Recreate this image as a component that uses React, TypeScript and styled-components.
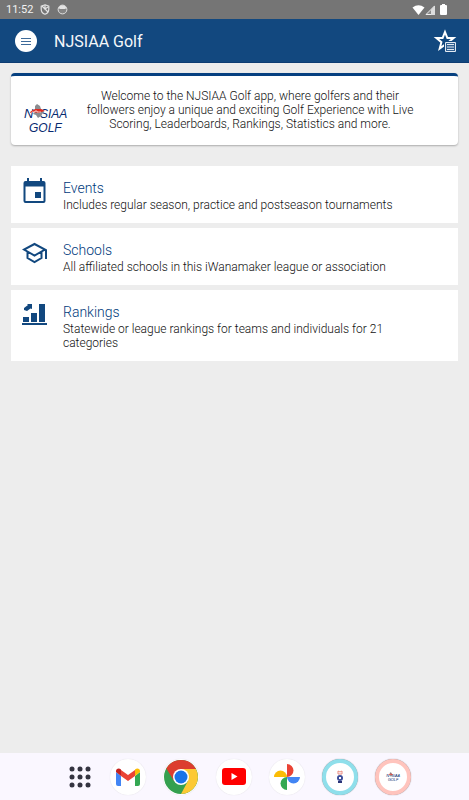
import React from "react";
import styled, { createGlobalStyle } from "styled-components";

const GlobalStyle = createGlobalStyle`
  *, *::before, *::after { box-sizing: border-box; }
  html, body { margin: 0; background: #ededed; }
  body { font-family: Roboto, "Liberation Sans", sans-serif; color: #111; }
`;

const Screen = styled.div`
  min-height: 100vh;
  display: flex;
  flex-direction: column;
  background: #ededed;
`;

const StatusBar = styled.div`
  height: 19px;
  padding: 0 20px 0 6px;
  display: flex;
  align-items: center;
  justify-content: space-between;
  background: #757575;
  color: #f2f2f2;
  font-size: 11px;
  line-height: 19px;
`;

const StatusGroup = styled.div<{ $gap: number }>`
  display: flex;
  align-items: center;
  gap: ${(p) => p.$gap}px;
  svg { display: block; }
`;

const AppBar = styled.header`
  height: 44px;
  padding: 0 12px 0 15px;
  display: flex;
  align-items: center;
  background: #12487f;
  border-bottom: 1px solid #0d3c72;
`;

const MenuButton = styled.button`
  width: 22px;
  height: 22px;
  padding: 0;
  border: 0;
  border-radius: 50%;
  background: #fff;
  display: grid;
  place-items: center;
`;

const Title = styled.h1`
  flex: 1;
  margin: 2px 0 0 17px;
  color: #f4f7fa;
  font-size: 16px;
  font-weight: 400;
  line-height: 20px;
`;

const IconButton = styled.button`
  padding: 0;
  border: 0;
  background: none;
  svg { display: block; }
`;

const Content = styled.main`
  flex: 1;
  padding: 10px 11px;
`;

const Welcome = styled.section`
  min-height: 72px;
  padding: 0 39px 2px 12px;
  display: flex;
  align-items: center;
  gap: 14px;
  background: #fff;
  border-top: 3px solid #064080;
  border-radius: 4px;
  box-shadow: 0 1px 2px rgba(0, 0, 0, 0.28);
`;

const LogoSlot = styled.div`
  flex: none;
  padding-top: 18px;
`;

const WelcomeText = styled.p`
  flex: 1;
  margin: 0;
  text-align: center;
  font-size: 12px;
  font-weight: 300;
  line-height: 14px;
`;

const List = styled.nav`
  margin-top: 21px;
  display: grid;
  gap: 5px;
`;

const Row = styled.a`
  padding: 11px 60px 11px 11px;
  display: flex;
  gap: 16px;
  background: #fff;
  color: inherit;
  text-decoration: none;
  svg { flex: none; display: block; }
`;

const RowTitle = styled.h2`
  margin: 1px 0 0;
  color: #003a7c;
  font-size: 14px;
  font-weight: 300;
  line-height: 20px;
`;

const RowText = styled.p`
  margin: 0;
  font-size: 12px;
  font-weight: 300;
  line-height: 14px;
`;

const Dock = styled.footer`
  height: 47px;
  padding-left: 8px;
  display: flex;
  align-items: center;
  justify-content: center;
  gap: 17px;
  background: #faf7ff;
`;

const DockButton = styled.button<{ $ring?: string }>`
  width: 36px;
  height: 36px;
  padding: 0;
  border: ${(p) => (p.$ring ? `4px solid ${p.$ring}` : "0")};
  border-radius: 50%;
  background: #fff;
  box-shadow: 0 0 1px rgba(0, 0, 0, ${(p) => (p.$ring ? 0.5 : 0.15)});
  display: grid;
  place-items: center;
  svg { display: block; }
`;

const AppsButton = styled(DockButton)`
  width: 26px;
  background: none;
  box-shadow: none;
`;

const LogoSvg = styled.svg`
  display: block;
  overflow: visible;
`;

function LeagueLogo({ width }: { width: number }) {
  return (
    <LogoSvg width={width} height={Math.round(width * 0.68)} viewBox="0 0 44 30" role="img" aria-label="NJSIAA Golf">
      <g fontFamily="Liberation Sans, sans-serif" fontStyle="italic" fill="#062a70">
        <text x="1" y="14" fontSize="13">N</text>
        <text x="17" y="14" fontSize="12">SIAA</text>
        <text x="6" y="28" fontSize="12">GOLF</text>
      </g>
      <path d="M12 2l2-2 3 2 1 3 3 2-3 5-3 2-2-3-3-1 2-3z" fill="#8b8c90" />
      <path d="M7 8l5-3h6l4 2-4 1-2 1-7-1-2 1z" fill="#e02a20" />
      <path d="M9 8h3v-1h2v1h4" fill="none" stroke="#fff" strokeWidth="0.7" />
    </LogoSvg>
  );
}

function CalendarIcon() {
  return (
    <svg width="25" height="28" viewBox="0 0 25 28" aria-hidden="true">
      <path d="M5 1h2v3h11V1h2v3h1.500a2 2 0 0 1 2 2v18a2 2 0 0 1-2 2h-18a2 2 0 0 1-2-2V6a2 2 0 0 1 2-2H5zM3.500 9.500V24h18V9.500z" fill="#12487f" fillRule="evenodd" />
      <path d="M13 15h6v6h-6z" fill="#12487f" />
    </svg>
  );
}

function SchoolIcon() {
  return (
    <svg width="25" height="28" viewBox="0 0 25 28" aria-hidden="true">
      <path d="M12.500 5L2 10.500l10.500 6L23 10.500zM5.500 13v6l7 4 7-4v-6M24 10.500V20" fill="none" stroke="#12487f" strokeWidth="2" />
    </svg>
  );
}

function RankingIcon() {
  return (
    <svg width="25" height="28" viewBox="0 0 25 28" aria-hidden="true">
      <path d="M0 22h25v2H0zM1 16h6v5H1zM9 12h6v9H9zM17 3h6v18h-6zM5 3h5v5L8.500 7.500 5 10 2 9V7l4-3z" fill="#12487f" />
    </svg>
  );
}

const links = [
  { title: "Events", text: "Includes regular season, practice and postseason tournaments", icon: <CalendarIcon /> },
  { title: "Schools", text: "All affiliated schools in this iWanamaker league or association", icon: <SchoolIcon /> },
  { title: "Rankings", text: "Statewide or league rankings for teams and individuals for 21 categories", icon: <RankingIcon /> },
];

function ShieldIcon() {
  return (
    <svg width="10" height="11" viewBox="0 0 10 11" aria-hidden="true">
      <path d="M5 .8l3.800 1.400v3C8.800 7.500 7 9.500 5 10.300 3 9.500 1.200 7.500 1.200 5.200v-3z" fill="none" stroke="#e4e4e4" strokeWidth="1.200" />
      <path d="M2 2l6 6M5 1v4l3-2" fill="none" stroke="#e4e4e4" strokeWidth="1.200" />
    </svg>
  );
}

function FaceIcon() {
  return (
    <svg width="11" height="11" viewBox="0 0 11 11" aria-hidden="true">
      <circle cx="5.500" cy="5.500" r="4.400" fill="#858585" stroke="#e0e0e0" />
      <path d="M1.500 4a4.300 4.300 0 0 1 8 0L8 5H3z" fill="#e4e4e4" />
    </svg>
  );
}

export default function App() {
  return (
    <Screen>
      <GlobalStyle />
      <StatusBar>
        <StatusGroup $gap={7}>
          <span>11:52</span>
          <ShieldIcon />
          <FaceIcon />
        </StatusGroup>
        <StatusGroup $gap={0} aria-label="Wi-Fi, signal and battery">
          <svg width="37" height="12" viewBox="0 0 37 12" aria-hidden="true">
            <path d="M.5 3.500Q6.500-1 12.500 3.500L6.500 11z" fill="#fff" />
            <path d="M14 10.500L22.500 2v8.500z" fill="#8a8a8a" stroke="#eee" />
            <path d="M19 5.500L23 1.500V11h-4z" fill="#ddd" />
            <path d="M30 0h3v1h1a1 1 0 0 1 1 1v8a1 1 0 0 1-1 1h-5a1 1 0 0 1-1-1V2a1 1 0 0 1 1-1h1z" fill="#fff" />
          </svg>
        </StatusGroup>
      </StatusBar>
      <AppBar>
        <MenuButton aria-label="Menu">
          <svg width="10" height="8" viewBox="0 0 10 8" aria-hidden="true">
            <path d="M0 1.500h10M0 4.500h10M0 7.500h10" stroke="#3d6a99" />
          </svg>
        </MenuButton>
        <Title>NJSIAA Golf</Title>
        <IconButton aria-label="Favorites">
          <svg width="24" height="24" viewBox="0 0 24 24" aria-hidden="true">
            <path d="M12 3l2.400 6h6.200l-5 4.200 1.700 6.300-5.300-3.700-5.300 3.700 1.700-6.300-5-4.200h6.200z" fill="none" stroke="#fff" strokeWidth="2" />
            <path d="M11 12h12v11H11z" fill="#12487f" />
            <path d="M12.500 13.500h10v9h-10z" fill="#315f90" stroke="#e3eaf2" />
            <path d="M14 15.500h7M14 18h7M14 20.500h7" stroke="#e3eaf2" />
          </svg>
        </IconButton>
      </AppBar>
      <Content>
        <Welcome>
          <LogoSlot>
            <LeagueLogo width={44} />
          </LogoSlot>
          <WelcomeText>
            Welcome to the NJSIAA Golf app, where golfers and their followers enjoy a unique and exciting Golf
            Experience with Live Scoring, Leaderboards, Rankings, Statistics and more.
          </WelcomeText>
        </Welcome>
        <List aria-label="Main">
          {links.map((item) => (
            <Row href="#" key={item.title}>
              {item.icon}
              <div>
                <RowTitle>{item.title}</RowTitle>
                <RowText>{item.text}</RowText>
              </div>
            </Row>
          ))}
        </List>
      </Content>
      <Dock>
        <AppsButton aria-label="All apps">
          <svg width="22" height="22" viewBox="0 0 22 22" fill="#343440" aria-hidden="true">
            {[3, 11, 19].map((y) => [3, 11, 19].map((x) => <circle key={`${x}-${y}`} cx={x} cy={y} r="2.500" />))}
          </svg>
        </AppsButton>
        <DockButton aria-label="Gmail">
          <svg width="24" height="18" viewBox="0 0 24 18" aria-hidden="true">
            <path d="M0 4l5 4v10H2a2 2 0 0 1-2-2z" fill="#4285f4" />
            <path d="M24 4l-5 4v10h3a2 2 0 0 0 2-2z" fill="#34a853" />
            <path d="M5 2l7 5 7-5v6l-7 5-7-5z" fill="#ea4335" />
            <path d="M0 3C0 .5 3-.5 5 1.500V8L0 4z" fill="#c5221f" />
            <path d="M24 3c0-2.500-3-3.500-5-1.500V8l5-4z" fill="#fbbc04" />
          </svg>
        </DockButton>
        <DockButton aria-label="Chrome">
          <svg width="34" height="34" viewBox="0 0 34 34" aria-hidden="true">
            <circle cx="17" cy="17" r="17" fill="#34a04f" />
            <path d="M17 9h14.900A17 17 0 0 1 17 34l6.900-13z" fill="#fcc934" />
            <path d="M17 9h15A17 17 0 0 0 2.300 8.500L10 21z" fill="#dc3d2e" />
            <circle cx="17" cy="17" r="8" fill="#fff" />
            <circle cx="17" cy="17" r="6.500" fill="#1a73e8" />
          </svg>
        </DockButton>
        <DockButton aria-label="YouTube">
          <svg width="24" height="17" viewBox="0 0 24 17" aria-hidden="true">
            <rect width="24" height="17" rx="3" fill="#f00" />
            <path d="M9.500 5l6 3.500-6 3.500z" fill="#fff" />
          </svg>
        </DockButton>
        <DockButton aria-label="Photos">
          <svg width="26" height="26" viewBox="0 0 26 26" aria-hidden="true">
            <path d="M13 0a6.500 6.500 0 0 1 0 13z" fill="#ea4335" />
            <path d="M26 13a6.500 6.500 0 0 1-13 0z" fill="#4285f4" />
            <path d="M13 26a6.500 6.500 0 0 1 0-13z" fill="#34a853" />
            <path d="M0 13a6.500 6.500 0 0 1 13 0z" fill="#fbbc04" />
          </svg>
        </DockButton>
        <DockButton $ring="#8fdfeb" aria-label="State golf association">
          <svg width="8" height="14" viewBox="0 0 8 14" aria-hidden="true">
            <path d="M2 1l2 1 2-1v3H2z" fill="none" stroke="#ea8c80" />
            <circle cx="4" cy="8" r="3" fill="#3c4d9a" />
            <path d="M3 7h2v2H3z" fill="#fff" />
            <path d="M2 12h4" stroke="#2b3477" strokeWidth="2" />
          </svg>
        </DockButton>
        <DockButton $ring="#ffc4bd" aria-label="NJSIAA Golf">
          <LeagueLogo width={14} />
        </DockButton>
      </Dock>
    </Screen>
  );
}
